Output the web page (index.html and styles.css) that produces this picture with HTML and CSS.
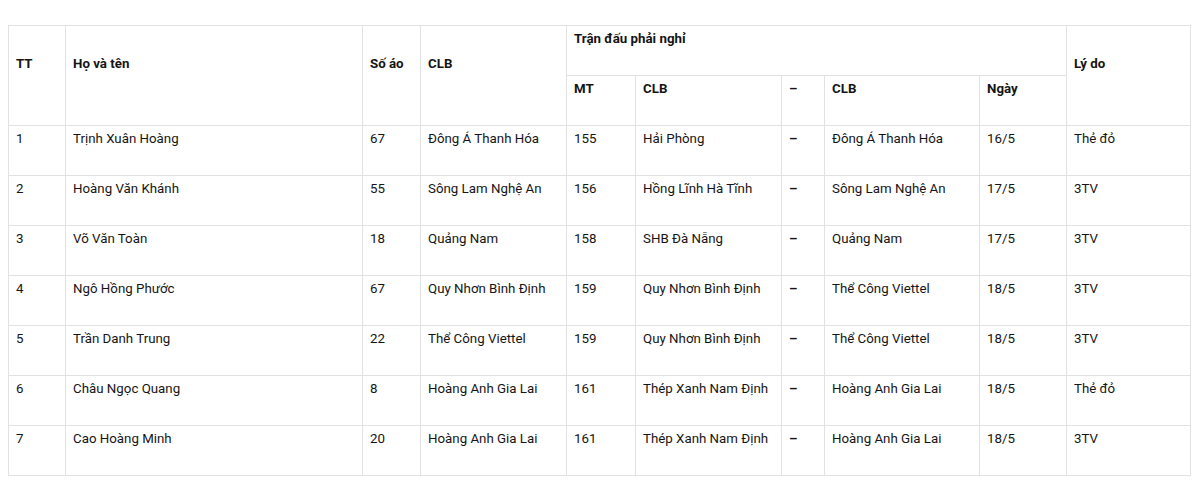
FILE: index.html
```html
<!DOCTYPE html>
<html lang="vi">
<head>
<meta charset="utf-8">
<link rel="stylesheet" href="styles.css">
</head>
<body>
<div class="wrap">
<table class="tbl">
<colgroup>
<col class="c1"><col class="c2"><col class="c3"><col class="c4"><col class="c5"><col class="c6"><col class="c7"><col class="c8"><col class="c9"><col class="c10">
</colgroup>
<thead>
<tr>
<th rowspan="2">TT</th>
<th rowspan="2">Họ và tên</th>
<th rowspan="2">Số áo</th>
<th rowspan="2">CLB</th>
<th colspan="5">Trận đấu phải nghỉ</th>
<th rowspan="2">Lý do</th>
</tr>
<tr>
<th>MT</th>
<th>CLB</th>
<th>–</th>
<th>CLB</th>
<th>Ngày</th>
</tr>
</thead>
<tbody>
<tr><td>1</td><td>Trịnh Xuân Hoàng</td><td>67</td><td>Đông Á Thanh Hóa</td><td>155</td><td>Hải Phòng</td><td class="dash">–</td><td>Đông Á Thanh Hóa</td><td>16/5</td><td>Thẻ đỏ</td></tr>
<tr><td>2</td><td>Hoàng Văn Khánh</td><td>55</td><td>Sông Lam Nghệ An</td><td>156</td><td>Hồng Lĩnh Hà Tĩnh</td><td class="dash">–</td><td>Sông Lam Nghệ An</td><td>17/5</td><td>3TV</td></tr>
<tr><td>3</td><td>Võ Văn Toàn</td><td>18</td><td>Quảng Nam</td><td>158</td><td>SHB Đà Nẵng</td><td class="dash">–</td><td>Quảng Nam</td><td>17/5</td><td>3TV</td></tr>
<tr><td>4</td><td>Ngô Hồng Phước</td><td>67</td><td>Quy Nhơn Bình Định</td><td>159</td><td>Quy Nhơn Bình Định</td><td class="dash">–</td><td>Thể Công Viettel</td><td>18/5</td><td>3TV</td></tr>
<tr><td>5</td><td>Trần Danh Trung</td><td>22</td><td>Thể Công Viettel</td><td>159</td><td>Quy Nhơn Bình Định</td><td class="dash">–</td><td>Thể Công Viettel</td><td>18/5</td><td>3TV</td></tr>
<tr><td>6</td><td>Châu Ngọc Quang</td><td>8</td><td>Hoàng Anh Gia Lai</td><td>161</td><td>Thép Xanh Nam Định</td><td class="dash">–</td><td>Hoàng Anh Gia Lai</td><td>18/5</td><td>Thẻ đỏ</td></tr>
<tr><td>7</td><td>Cao Hoàng Minh</td><td>20</td><td>Hoàng Anh Gia Lai</td><td>161</td><td>Thép Xanh Nam Định</td><td class="dash">–</td><td>Hoàng Anh Gia Lai</td><td>18/5</td><td>3TV</td></tr>
</tbody>
</table>
</div>
</body>
</html>
```
FILE: styles.css
```css
html, body {
  margin: 0;
  padding: 0;
  background: #ffffff;
}
.wrap {
  padding: 25px 0 0 8px;
}
.tbl {
  border-collapse: collapse;
  table-layout: fixed;
  width: 1182px;
  font-family: Roboto, "Noto Sans", sans-serif;
  font-size: 13.3px;
  line-height: 20px;
  color: #151515;
}
.c1 { width: 57px; }
.c2 { width: 297px; }
.c3 { width: 58px; }
.c4 { width: 146px; }
.c5 { width: 69px; }
.c6 { width: 146px; }
.c7 { width: 43px; }
.c8 { width: 155px; }
.c9 { width: 87px; }
.c10 { width: 124px; }
.tbl th, .tbl td {
  border: 1px solid #e2e2e2;
  padding: 0 7px 23px 7px;
  height: 26px;
  text-align: left;
  vertical-align: middle;
  overflow: hidden;
  white-space: nowrap;
}
.tbl th {
  font-weight: 700;
}
.tbl .dash {
  font-weight: 700;
}
```
